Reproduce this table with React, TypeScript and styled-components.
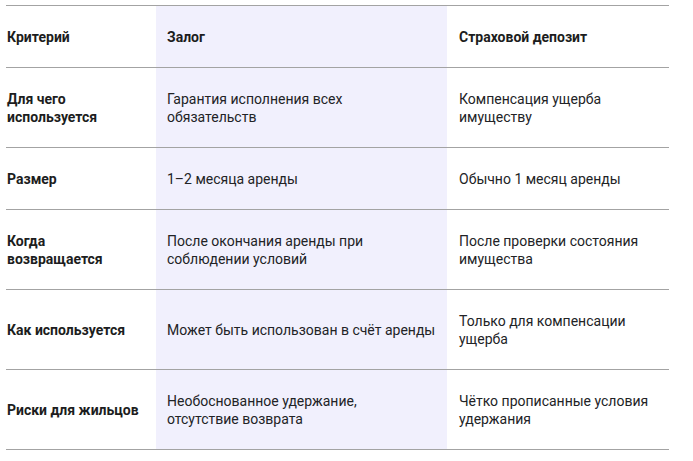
import styled, { createGlobalStyle } from "styled-components";

const GlobalStyle = createGlobalStyle`
  body {
    margin: 0;
    background: #ffffff;
    font-family: Roboto, "Noto Sans", sans-serif;
  }
`;

interface Row {
  criterion: string;
  pledge: string;
  deposit: string;
}

// line breaks follow the original wrapping
const rows: Row[] = [
  {
    criterion: "Для чего\nиспользуется",
    pledge: "Гарантия исполнения всех\nобязательств",
    deposit: "Компенсация ущерба\nимуществу",
  },
  {
    criterion: "Размер",
    pledge: "1–2 месяца аренды",
    deposit: "Обычно 1 месяц аренды",
  },
  {
    criterion: "Когда\nвозвращается",
    pledge: "После окончания аренды при\nсоблюдении условий",
    deposit: "После проверки состояния\nимущества",
  },
  {
    criterion: "Как используется",
    pledge: "Может быть использован в счёт аренды",
    deposit: "Только для компенсации\nущерба",
  },
  {
    criterion: "Риски для жильцов",
    pledge: "Необоснованное удержание,\nотсутствие возврата",
    deposit: "Чётко прописанные условия\nудержания",
  },
];

export default function App() {
  return (
    <>
      <GlobalStyle />
      <Page>
        <Table>
          <colgroup>
            <col style={{ width: 150 }} />
            <col style={{ width: 291 }} />
            <col style={{ width: 222 }} />
          </colgroup>
          <thead>
            <tr>
              <HeadCell $col={0}>Критерий</HeadCell>
              <HeadCell $col={1}>Залог</HeadCell>
              <HeadCell $col={2}>Страховой депозит</HeadCell>
            </tr>
          </thead>
          <tbody>
            {rows.map((row) => (
              <tr key={row.criterion}>
                <Criterion>{row.criterion}</Criterion>
                <Cell $col={1}>{row.pledge}</Cell>
                <Cell $col={2}>{row.deposit}</Cell>
              </tr>
            ))}
          </tbody>
        </Table>
      </Page>
    </>
  );
}

const Page = styled.div`
  padding: 5px 6px;
`;

const Table = styled.table`
  width: 663px;
  border-collapse: collapse;
  table-layout: fixed;
  border-top: 1px solid #a3a3a3;
`;

const padLeft = [1, 11, 12];

const BaseCell = styled.td<{ $col: number }>`
  padding: 22px 6px 21px ${(p) => padLeft[p.$col]}px;
  border-bottom: 1px solid #a3a3a3;
  vertical-align: middle;
  text-align: left;
  font-size: 14px;
  line-height: 18px;
  white-space: pre-line;
  color: #222326;
  background: ${(p) => (p.$col === 1 ? "#f1f0fd" : "transparent")};
`;

const HeadCell = styled(BaseCell).attrs({ as: "th" })`
  font-weight: 700;
  color: #1c1d20;
`;

const Cell = styled(BaseCell)`
  font-weight: 400;
`;

const Criterion = styled(BaseCell).attrs({ $col: 0 })`
  font-weight: 700;
  color: #1c1d20;
  padding-right: 4px;
`;
